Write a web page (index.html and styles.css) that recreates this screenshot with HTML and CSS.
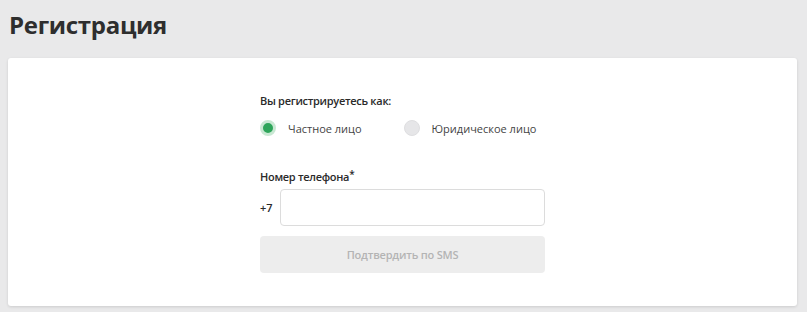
FILE: index.html
```html
<!DOCTYPE html>
<html lang="ru">
<head>
<meta charset="utf-8">
<title>Регистрация</title>
<link rel="stylesheet" href="styles.css">
</head>
<body>
<div class="page">
  <h1 class="title">Регистрация</h1>
  <div class="card">
    <form class="form">
      <div class="label">Вы регистрируетесь как:</div>
      <div class="radios">
        <label class="radio"><span class="dot dot-on"></span><span class="rtext">Частное лицо</span></label>
        <label class="radio"><span class="dot"></span><span class="rtext">Юридическое лицо</span></label>
      </div>
      <div class="label label-phone">Номер телефона<sup class="req">*</sup></div>
      <div class="phone">
        <span class="prefix">+7</span>
        <div class="input"></div>
      </div>
      <div class="btn">Подтвердить по SMS</div>
    </form>
  </div>
</div>
</body>
</html>
```

FILE: styles.css
```css
* { box-sizing: border-box; }
html, body { margin: 0; padding: 0; }
body {
  background: #e9e9ea;
  font-family: "Open Sans", "Liberation Sans", sans-serif;
  color: #333;
  width: 807px;
  height: 312px;
  overflow: hidden;
}
.page {
  padding: 0 10px 0 8px;
}
.title {
  margin: 0;
  padding: 6px 0 0 1px;
  height: 58px;
  font-size: 24px;
  font-weight: 700;
  color: #2e2e2e;
  line-height: 38px;
  letter-spacing: -0.3px;
}
.card {
  background: #fff;
  border-radius: 3px;
  box-shadow: 0 1px 3px rgba(0,0,0,0.12);
  height: 248px;
  display: flex;
  justify-content: center;
  padding-top: 35px;
}
.form {
  width: 285px;
  display: flex;
  flex-direction: column;
}
.label {
  font-size: 11px;
  font-weight: 600;
  color: #2a2a2a;
  line-height: 16px;
  letter-spacing: -0.3px;
}
.radios {
  display: flex;
  margin-top: 8px;
  height: 22px;
  align-items: center;
  white-space: nowrap;
}
.radio {
  display: flex;
  align-items: center;
  font-size: 11px;
  color: #444;
  margin-right: 42px;
  white-space: nowrap;
}
.rtext { letter-spacing: 0; }
.dot {
  flex-shrink: 0;
  width: 16px;
  height: 16px;
  border-radius: 50%;
  background: #e6e6e8;
  margin-right: 12px;
  border: 1px solid #dedee0;
}
.dot-on {
  background: #2ea55a;
  border: 3px solid #c9e8d3;
}
.label-phone {
  margin-top: 30px;
}
.req {
  font-size: 10px;
  vertical-align: top;
  line-height: 10px;
}
.phone {
  display: flex;
  align-items: center;
  margin-top: 4px;
}
.prefix {
  font-size: 11px;
  font-weight: 600;
  color: #2a2a2a;
  width: 20px;
}
.input {
  flex: 1;
  height: 37px;
  border: 1px solid #dcdcdc;
  border-radius: 4px;
  background: #fff;
}
.btn {
  margin-top: 10px;
  height: 37px;
  background: #ededed;
  border-radius: 4px;
  color: #b4b4b4;
  font-size: 11px;
  font-weight: 600;
  letter-spacing: -0.2px;
  display: flex;
  align-items: center;
  justify-content: center;
}
```
